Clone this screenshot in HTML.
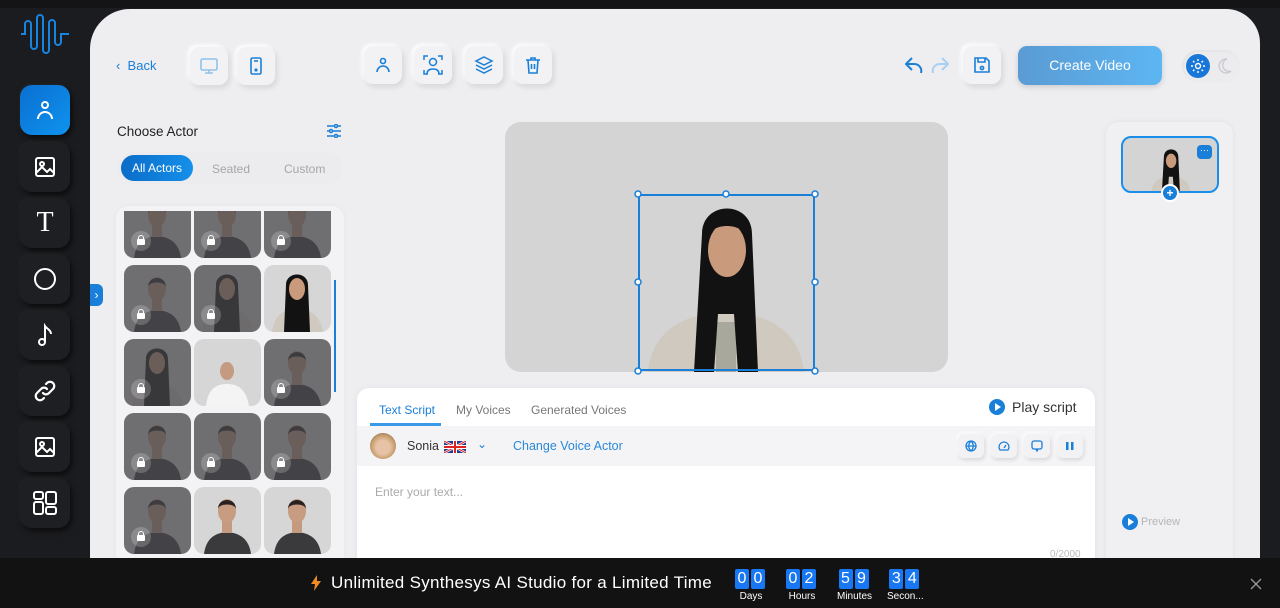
<!DOCTYPE html>
<html><head><meta charset="utf-8"><style>
*{box-sizing:border-box;margin:0;padding:0}
body{width:1280px;height:608px;overflow:hidden;background:#1b1c1f;font-family:"Liberation Sans",sans-serif;position:relative}
.abs{position:absolute}
.top{left:0;top:0;width:1280px;height:8px;background:#141416}
.main{left:90px;top:9px;width:1170px;height:560px;background:#eeeef1;border-radius:40px 34px 0 0}
.sb{left:20px;width:50px;height:50px;border-radius:12px;background:#1e1f22;box-shadow:2px 3px 6px rgba(0,0,0,.6),-1px -1px 3px rgba(255,255,255,.05);display:flex;align-items:center;justify-content:center}
.sb.act{background:linear-gradient(135deg,#0a6fd0,#0f93ef)}
.tb{width:38px;height:38px;border-radius:9px;background:#f2f2f4;box-shadow:2px 3px 6px rgba(0,0,0,.1),-2px -2px 4px #fff;display:flex;align-items:center;justify-content:center}
.cell{width:67px;height:67px;border-radius:10px;overflow:hidden;background:#d6d6d6;position:relative}
.cell.lk::after{content:"";position:absolute;inset:0;background:rgba(70,70,75,.72)}
.lock{position:absolute;left:7px;bottom:7px;width:20px;height:20px;border-radius:50%;background:rgba(255,255,255,.2);z-index:2;display:flex;align-items:center;justify-content:center}
.lock i{display:block;width:8px;height:6px;background:#fff;border-radius:1px;position:relative;top:1px}
.lock i::before{content:"";position:absolute;left:1px;top:-4px;width:6px;height:5px;border:1.2px solid #fff;border-bottom:none;border-radius:3px 3px 0 0;box-sizing:border-box}
.ic{width:26px;height:24px;border-radius:6px;background:#f2f2f4;box-shadow:1px 2px 4px rgba(0,0,0,.12),-1px -1px 3px #fff;display:flex;align-items:center;justify-content:center}
.dg{display:inline-block;width:14px;height:20px;background:#1877f2;color:#fff;font-size:16px;line-height:20px;text-align:center;border-radius:2px;margin-right:2px}
.dl{color:#fff;font-size:10px;text-align:center;margin-top:2px}
</style></head><body>
<svg width="0" height="0" style="position:absolute"><defs>
<symbol id="p" viewBox="0 0 67 67"><path d="M10 67 C12 52 20 46 33 45 C46 46 55 52 57 67Z" fill="#3a3a3d"/><rect x="28" y="34" width="10" height="12" fill="#c49a80"/><ellipse cx="33" cy="24" rx="9" ry="12" fill="#c79c80"/><path d="M24 22 C24 10 42 10 42 22 C41 16 25 16 24 22Z" fill="#2a2220"/></symbol>
<symbol id="w" viewBox="0 0 67 67"><path d="M8 67 C10 50 20 44 33 44 C46 44 56 50 59 67Z" fill="#cfc9c0"/><path d="M22 20 C22 6 44 6 44 20 L46 67 L20 67Z" fill="#121212"/><ellipse cx="33" cy="24" rx="8" ry="11" fill="#c99a7c"/></symbol>
</defs></svg>
<div class="abs top"></div>
<svg class="abs" style="left:20px;top:13px" width="50" height="42" viewBox="0 0 50 42"><path d="M1 21H5V11a3 3 0 0 1 6 0V33a3 3 0 0 0 6 0V5a3 3 0 0 1 6 0V37a3 3 0 0 0 6 0V10a3 3 0 0 1 6 0V29a3 3 0 0 0 6 0V21H49" fill="none" stroke="#1784e0" stroke-width="2"/></svg>
<div class="abs sb act" style="top:85px"><svg width="22" height="22" viewBox="0 0 22 22" fill="none" stroke="#fff" stroke-width="2"><circle cx="11" cy="6" r="3"/><path d="M4 20a7 7 0 0 1 14 0"/></svg></div>
<div class="abs sb" style="top:142px"><svg width="22" height="22" viewBox="0 0 22 22" fill="none" stroke="#fff" stroke-width="2"><rect x="2" y="2" width="18" height="18" rx="2"/><circle cx="8" cy="8" r="2"/><path d="M2 17l6-6 5 5 3-3 4 4"/></svg></div>
<div class="abs sb" style="top:198px"><span style="color:#fff;font:28px 'Liberation Serif',serif">T</span></div>
<div class="abs sb" style="top:254px"><svg width="24" height="24"><circle cx="12" cy="12" r="10" fill="none" stroke="#fff" stroke-width="2"/></svg></div>
<div class="abs sb" style="top:310px"><svg width="22" height="24" viewBox="0 0 22 24" fill="none" stroke="#fff" stroke-width="2"><circle cx="8" cy="19" r="3"/><path d="M11 19V3c2 3 6 4 6 8"/></svg></div>
<div class="abs sb" style="top:366px"><svg width="24" height="24" viewBox="0 0 24 24" fill="none" stroke="#fff" stroke-width="2.2" stroke-linecap="round"><path d="M10 14a4 4 0 0 0 6 0l4-4a4 4 0 0 0-6-6l-1 1"/><path d="M14 10a4 4 0 0 0-6 0l-4 4a4 4 0 0 0 6 6l1-1"/></svg></div>
<div class="abs sb" style="top:422px"><svg width="22" height="22" viewBox="0 0 22 22" fill="none" stroke="#fff" stroke-width="2"><rect x="2" y="2" width="18" height="18" rx="2"/><circle cx="8" cy="8" r="2"/><path d="M2 17l6-6 5 5 3-3 4 4"/></svg></div>
<div class="abs sb" style="top:478px"><svg width="26" height="26" viewBox="0 0 26 26" fill="none" stroke="#fff" stroke-width="2"><rect x="2" y="2" width="9" height="7" rx="2"/><rect x="2" y="12" width="9" height="12" rx="2"/><rect x="14" y="2" width="10" height="12" rx="2"/><rect x="14" y="17" width="10" height="7" rx="2"/></svg></div>

<div class="abs main"></div>
<div class="abs" style="left:116px;top:58px;color:#1a7fd8;font-size:13px">‹&nbsp;&nbsp;Back</div>
<div class="abs tb" style="left:190px;top:47px"><svg width="20" height="20" viewBox="0 0 20 20" fill="none" stroke="#8fc2ec" stroke-width="1.6"><rect x="2" y="3" width="16" height="11" rx="1.5"/><path d="M10 14v3M6 17h8"/></svg></div>
<div class="abs tb" style="left:237px;top:47px"><svg width="20" height="20" viewBox="0 0 20 20" fill="none" stroke="#1a7fd8" stroke-width="1.6"><rect x="5" y="2" width="10" height="16" rx="1.5"/><path d="M8 5h4"/><circle cx="10" cy="14" r=".8" fill="#1a7fd8"/></svg></div>
<div class="abs tb" style="left:364px;top:46px"><svg width="20" height="20" viewBox="0 0 20 20" fill="none" stroke="#1a7fd8" stroke-width="1.6"><circle cx="10" cy="6" r="2.5"/><path d="M4 17a6 6 0 0 1 12 0"/></svg></div>
<div class="abs tb" style="left:414px;top:46px"><svg width="22" height="22" viewBox="0 0 22 22" fill="none" stroke="#1a7fd8" stroke-width="1.5"><path d="M2 6V2h4M16 2h4v4M2 16v4h4M20 16v4h-4"/><circle cx="11" cy="8" r="3.5"/><path d="M5 20c0-4 3-5 6-5s6 1 6 5"/></svg></div>
<div class="abs tb" style="left:465px;top:46px"><svg width="20" height="20" viewBox="0 0 20 20" fill="none" stroke="#1a7fd8" stroke-width="1.5"><path d="M10 2l8 4-8 4-8-4z"/><path d="M2 10l8 4 8-4M2 14l8 4 8-4"/></svg></div>
<div class="abs tb" style="left:514px;top:46px"><svg width="20" height="20" viewBox="0 0 20 20" fill="none" stroke="#1a7fd8" stroke-width="1.6"><path d="M3 5h14M8 5V3h4v2M5 5l1 13h8l1-13M8.5 9v5M11.5 9v5"/></svg></div>
<svg class="abs" style="left:904px;top:56px" width="46" height="20" viewBox="0 0 46 20" fill="none" stroke-width="2" stroke-linejoin="round"><path d="M8 2L2 8l6 6M2 8h8a7 7 0 0 1 7 9" stroke="#1a7fd8"/><path d="M38 2l6 6-6 6M44 8h-8a7 7 0 0 0-7 9" stroke="#a8d0f2"/></svg>
<div class="abs tb" style="left:963px;top:46px"><svg width="20" height="20" viewBox="0 0 20 20" fill="none" stroke="#1a7fd8" stroke-width="1.6"><path d="M3 3h11l3 3v11H3z"/><path d="M6 3v4h7V3"/><circle cx="10" cy="13" r="1.6"/></svg></div>
<div class="abs" style="left:1018px;top:46px;width:144px;height:39px;border-radius:9px;background:linear-gradient(90deg,#5b9bd4,#5cb6f2);color:#fff;font-size:14px;line-height:39px;text-align:center;box-shadow:0 2px 6px rgba(0,0,0,.15)">Create Video</div>
<div class="abs" style="left:1182px;top:50px;width:58px;height:32px;border-radius:16px;background:#ececef;box-shadow:inset 1px 1px 3px rgba(0,0,0,.05)"></div>
<div class="abs" style="left:1186px;top:54px;width:24px;height:24px;border-radius:50%;background:#1877d8;display:flex;align-items:center;justify-content:center"><svg width="14" height="14" viewBox="0 0 14 14" fill="none" stroke="#fff" stroke-width="1.4"><circle cx="7" cy="7" r="2.5"/><path d="M7 0v2M7 12v2M0 7h2M12 7h2M2 2l1.4 1.4M10.6 10.6L12 12M2 12l1.4-1.4M10.6 3.4L12 2"/></svg></div>
<svg class="abs" style="left:1218px;top:58px" width="14" height="16" viewBox="0 0 14 16"><path d="M9 1a7 7 0 1 0 4 12A6 6 0 0 1 9 1z" fill="none" stroke="#c9cbd3" stroke-width="1.4"/></svg>

<div class="abs" style="left:117px;top:124px;font-size:13.5px;color:#222">Choose Actor</div>
<svg class="abs" style="left:326px;top:124px" width="16" height="14" viewBox="0 0 16 14" fill="none" stroke="#1a7fd8" stroke-width="1.5"><path d="M1 2h14M1 7h14M1 12h14"/><circle cx="10" cy="2" r="1.5" fill="#eee"/><circle cx="5" cy="7" r="1.5" fill="#eee"/><circle cx="10" cy="12" r="1.5" fill="#eee"/></svg>
<div class="abs" style="left:118px;top:152px;width:224px;height:32px;border-radius:16px;background:#ececef"></div>
<div class="abs" style="left:121px;top:155px;width:72px;height:26px;border-radius:13px;background:linear-gradient(90deg,#0a6cc8,#1590ea);color:#fff;font-size:12px;line-height:26px;text-align:center">All Actors</div>
<div class="abs" style="left:212px;top:162px;font-size:12px;color:#a6a6aa">Seated</div>
<div class="abs" style="left:284px;top:162px;font-size:12px;color:#a6a6aa">Custom</div>
<div class="abs" style="left:116px;top:206px;width:228px;height:360px;border-radius:12px;background:#f3f3f5;box-shadow:0 0 6px rgba(0,0,0,.04)"></div>
<div class="abs" style="left:124px;top:211px;width:207px;height:347px;overflow:hidden">
 <div class="abs" style="left:0;top:-20px;display:grid;grid-template-columns:67px 67px 67px;gap:7px 3px">
  <div class="cell lk"><svg width="67" height="67"><use href="#p"/></svg><div class="lock"><i></i></div></div>
  <div class="cell lk"><svg width="67" height="67"><use href="#p"/></svg><div class="lock"><i></i></div></div>
  <div class="cell lk"><svg width="67" height="67"><use href="#p"/></svg><div class="lock"><i></i></div></div>
  <div class="cell lk"><svg width="67" height="67"><use href="#p"/></svg><div class="lock"><i></i></div></div>
  <div class="cell lk"><svg width="67" height="67"><use href="#w"/></svg><div class="lock"><i></i></div></div>
  <div class="cell"><svg width="67" height="67"><use href="#w"/></svg></div>
  <div class="cell lk"><svg width="67" height="67"><use href="#w"/></svg><div class="lock"><i></i></div></div>
  <div class="cell"><svg width="67" height="67"><path d="M12 67C14 50 22 45 33 45S52 50 55 67Z" fill="#f4f4f4"/><ellipse cx="33" cy="32" rx="7" ry="9" fill="#c49a80"/></svg></div>
  <div class="cell lk"><svg width="67" height="67"><use href="#p"/></svg><div class="lock"><i></i></div></div>
  <div class="cell lk"><svg width="67" height="67"><use href="#p"/></svg><div class="lock"><i></i></div></div>
  <div class="cell lk"><svg width="67" height="67"><use href="#p"/></svg><div class="lock"><i></i></div></div>
  <div class="cell lk"><svg width="67" height="67"><use href="#p"/></svg><div class="lock"><i></i></div></div>
  <div class="cell lk"><svg width="67" height="67"><use href="#p"/></svg><div class="lock"><i></i></div></div>
  <div class="cell"><svg width="67" height="67"><use href="#p"/></svg></div>
  <div class="cell"><svg width="67" height="67"><use href="#p"/></svg></div>
 </div>
</div>
<div class="abs" style="left:334px;top:280px;width:2px;height:112px;background:#1a7fd8"></div>
<div class="abs" style="left:90px;top:284px;width:13px;height:22px;border-radius:0 6px 6px 0;background:#1a7fd8;color:#fff;font-size:12px;line-height:22px;text-align:center">›</div>

<div class="abs" style="left:505px;top:122px;width:443px;height:250px;border-radius:16px;background:#d4d4d4;overflow:hidden">
 <svg class="abs" style="left:133px;top:72px" width="177" height="178" viewBox="0 0 177 178"><path d="M10 178C14 140 40 120 88 118C136 120 162 140 166 178Z" fill="#cfc9bf"/><rect x="78" y="128" width="20" height="50" fill="#a9a89c"/><path d="M64 40C64 6 114 6 114 40L120 178L100 178L96 120H80L76 178H56Z" fill="#121212"/><ellipse cx="89" cy="56" rx="19" ry="27" fill="#c99a7c"/><path d="M68 44C68 14 110 14 110 44C104 28 74 28 68 44Z" fill="#121212"/></svg>
</div>
<div class="abs" style="left:638px;top:194px;width:177px;height:177px;border:2px solid #1a7fd8"></div>
<svg class="abs" style="left:632px;top:188px" width="190" height="190"><g fill="#fff" stroke="#1a7fd8" stroke-width="1.5"><circle cx="6" cy="6" r="3"/><circle cx="94" cy="6" r="3"/><circle cx="183" cy="6" r="3"/><circle cx="6" cy="94" r="3"/><circle cx="183" cy="94" r="3"/><circle cx="6" cy="183" r="3"/><circle cx="183" cy="183" r="3"/></g></svg>

<div class="abs" style="left:357px;top:388px;width:738px;height:180px;border-radius:12px 12px 0 0;background:#fff;box-shadow:0 0 6px rgba(0,0,0,.05)"></div>
<div class="abs" style="left:379px;top:403px;font-size:12px;color:#1a7fd8">Text Script</div>
<div class="abs" style="left:370px;top:423px;width:71px;height:3px;background:#3a9ae8"></div>
<div class="abs" style="left:456px;top:403px;font-size:12px;color:#777">My Voices</div>
<div class="abs" style="left:531px;top:403px;font-size:12px;color:#777">Generated Voices</div>
<div class="abs" style="left:989px;top:399px;width:16px;height:16px;border-radius:50%;background:#1a7fd8"></div>
<div class="abs" style="left:995px;top:403px;width:0;height:0;border-left:6px solid #fff;border-top:4px solid transparent;border-bottom:4px solid transparent"></div>
<div class="abs" style="left:1012px;top:399px;font-size:14px;color:#333">Play script</div>
<div class="abs" style="left:357px;top:426px;width:738px;height:40px;background:#f4f4f6"></div>
<div class="abs" style="left:370px;top:433px;width:26px;height:26px;border-radius:50%;background:radial-gradient(circle at 50% 55%,#e8c2a6 35%,#c8a070 60%,#6b4a36)"></div>
<div class="abs" style="left:407px;top:439px;font-size:12.5px;color:#333">Sonia</div>
<svg class="abs" style="left:444px;top:441px" width="22" height="12" viewBox="0 0 22 12"><rect width="22" height="12" fill="#1f3b8f"/><path d="M0 0L22 12M22 0L0 12" stroke="#fff" stroke-width="2.5"/><path d="M0 0L22 12M22 0L0 12" stroke="#d22" stroke-width="1"/><path d="M11 0v12M0 6h22" stroke="#fff" stroke-width="4"/><path d="M11 0v12M0 6h22" stroke="#d22" stroke-width="2"/></svg>
<div class="abs" style="left:477px;top:437px;font-size:12px;color:#1a7fd8">⌄</div>
<div class="abs" style="left:513px;top:439px;font-size:12.5px;color:#2a88d8">Change Voice Actor</div>
<div class="abs ic" style="left:958px;top:434px"><svg width="12" height="12" viewBox="0 0 12 12" fill="none" stroke="#1a7fd8" stroke-width="1.3"><circle cx="6" cy="6" r="5"/><path d="M1 6h10M6 1c-3 3-3 7 0 10M6 1c3 3 3 7 0 10"/></svg></div>
<div class="abs ic" style="left:991px;top:434px"><svg width="12" height="12" viewBox="0 0 12 12" fill="none" stroke="#1a7fd8" stroke-width="1.3"><path d="M2 10a5 5 0 1 1 8 0z"/><path d="M6 8l2-3"/></svg></div>
<div class="abs ic" style="left:1024px;top:434px"><svg width="12" height="12" viewBox="0 0 12 12" fill="none" stroke="#1a7fd8" stroke-width="1.3"><rect x="1" y="1" width="10" height="8" rx="2"/><path d="M5 9l1 2 1-2"/></svg></div>
<div class="abs ic" style="left:1057px;top:434px"><svg width="10" height="10"><rect x="1" y="1" width="2.5" height="8" fill="#1a7fd8"/><rect x="6" y="1" width="2.5" height="8" fill="#1a7fd8"/></svg></div>
<div class="abs" style="left:375px;top:485px;font-size:12px;color:#aaa">Enter your text...</div>
<div class="abs" style="left:1050px;top:549px;font-size:10px;color:#bbb">0/2000</div>

<div class="abs" style="left:1106px;top:122px;width:127px;height:446px;border-radius:12px 12px 0 0;background:#f0f0f3;box-shadow:0 0 6px rgba(0,0,0,.06)"></div>
<div class="abs" style="left:1121px;top:136px;width:98px;height:57px;border-radius:10px;border:2px solid #1a8ee8;background:#d4d4d4;overflow:hidden"><svg class="abs" style="left:26px;top:6px" width="44" height="50" viewBox="0 0 177 178"><path d="M10 178C14 140 40 120 88 118C136 120 162 140 166 178Z" fill="#cfc9bf"/><path d="M60 40C60 0 118 0 118 40L124 178L100 178L96 120H80L76 178H52Z" fill="#121212"/><ellipse cx="89" cy="56" rx="21" ry="29" fill="#c99a7c"/></svg></div>
<div class="abs" style="left:1197px;top:145px;width:15px;height:14px;border-radius:4px;background:#1a7fd8;color:#fff;font-size:9px;line-height:10px;text-align:center">···</div>
<div class="abs" style="left:1161px;top:184px;width:18px;height:18px;border-radius:50%;background:#1a7fd8;border:2px solid #fff;color:#fff;font-size:12px;line-height:14px;text-align:center;font-weight:bold">+</div>
<div class="abs" style="left:1122px;top:514px;width:16px;height:16px;border-radius:50%;background:#1a7fd8"></div>
<div class="abs" style="left:1128px;top:518px;width:0;height:0;border-left:6px solid #fff;border-top:4px solid transparent;border-bottom:4px solid transparent"></div>
<div class="abs" style="left:1141px;top:516px;font-size:11px;color:#b5b5b8">Preview</div>

<div class="abs" style="left:0;top:558px;width:1280px;height:50px;background:#121212"></div>
<svg class="abs" style="left:311px;top:575px" width="10" height="16" viewBox="0 0 10 16"><path d="M6 0L0 9h4l-1 7 7-10H6z" fill="#f08a24"/></svg>
<div class="abs" style="left:331px;top:573px;font-size:17px;letter-spacing:0.3px;color:#fff">Unlimited Synthesys AI Studio for a Limited Time</div>
<div class="abs" style="left:735px;top:569px;text-align:center"><div><span class="dg">0</span><span class="dg">0</span></div><div class="dl">Days</div></div>
<div class="abs" style="left:786px;top:569px;text-align:center"><div><span class="dg">0</span><span class="dg">2</span></div><div class="dl">Hours</div></div>
<div class="abs" style="left:837px;top:569px;text-align:center"><div><span class="dg">5</span><span class="dg">9</span></div><div class="dl">Minutes</div></div>
<div class="abs" style="left:887px;top:569px;text-align:center"><div><span class="dg">3</span><span class="dg">4</span></div><div class="dl">Secon...</div></div>
<svg class="abs" style="left:1250px;top:578px" width="12" height="12"><path d="M1 1l10 10M11 1L1 11" stroke="#999" stroke-width="1.3"/></svg>
</body></html>
